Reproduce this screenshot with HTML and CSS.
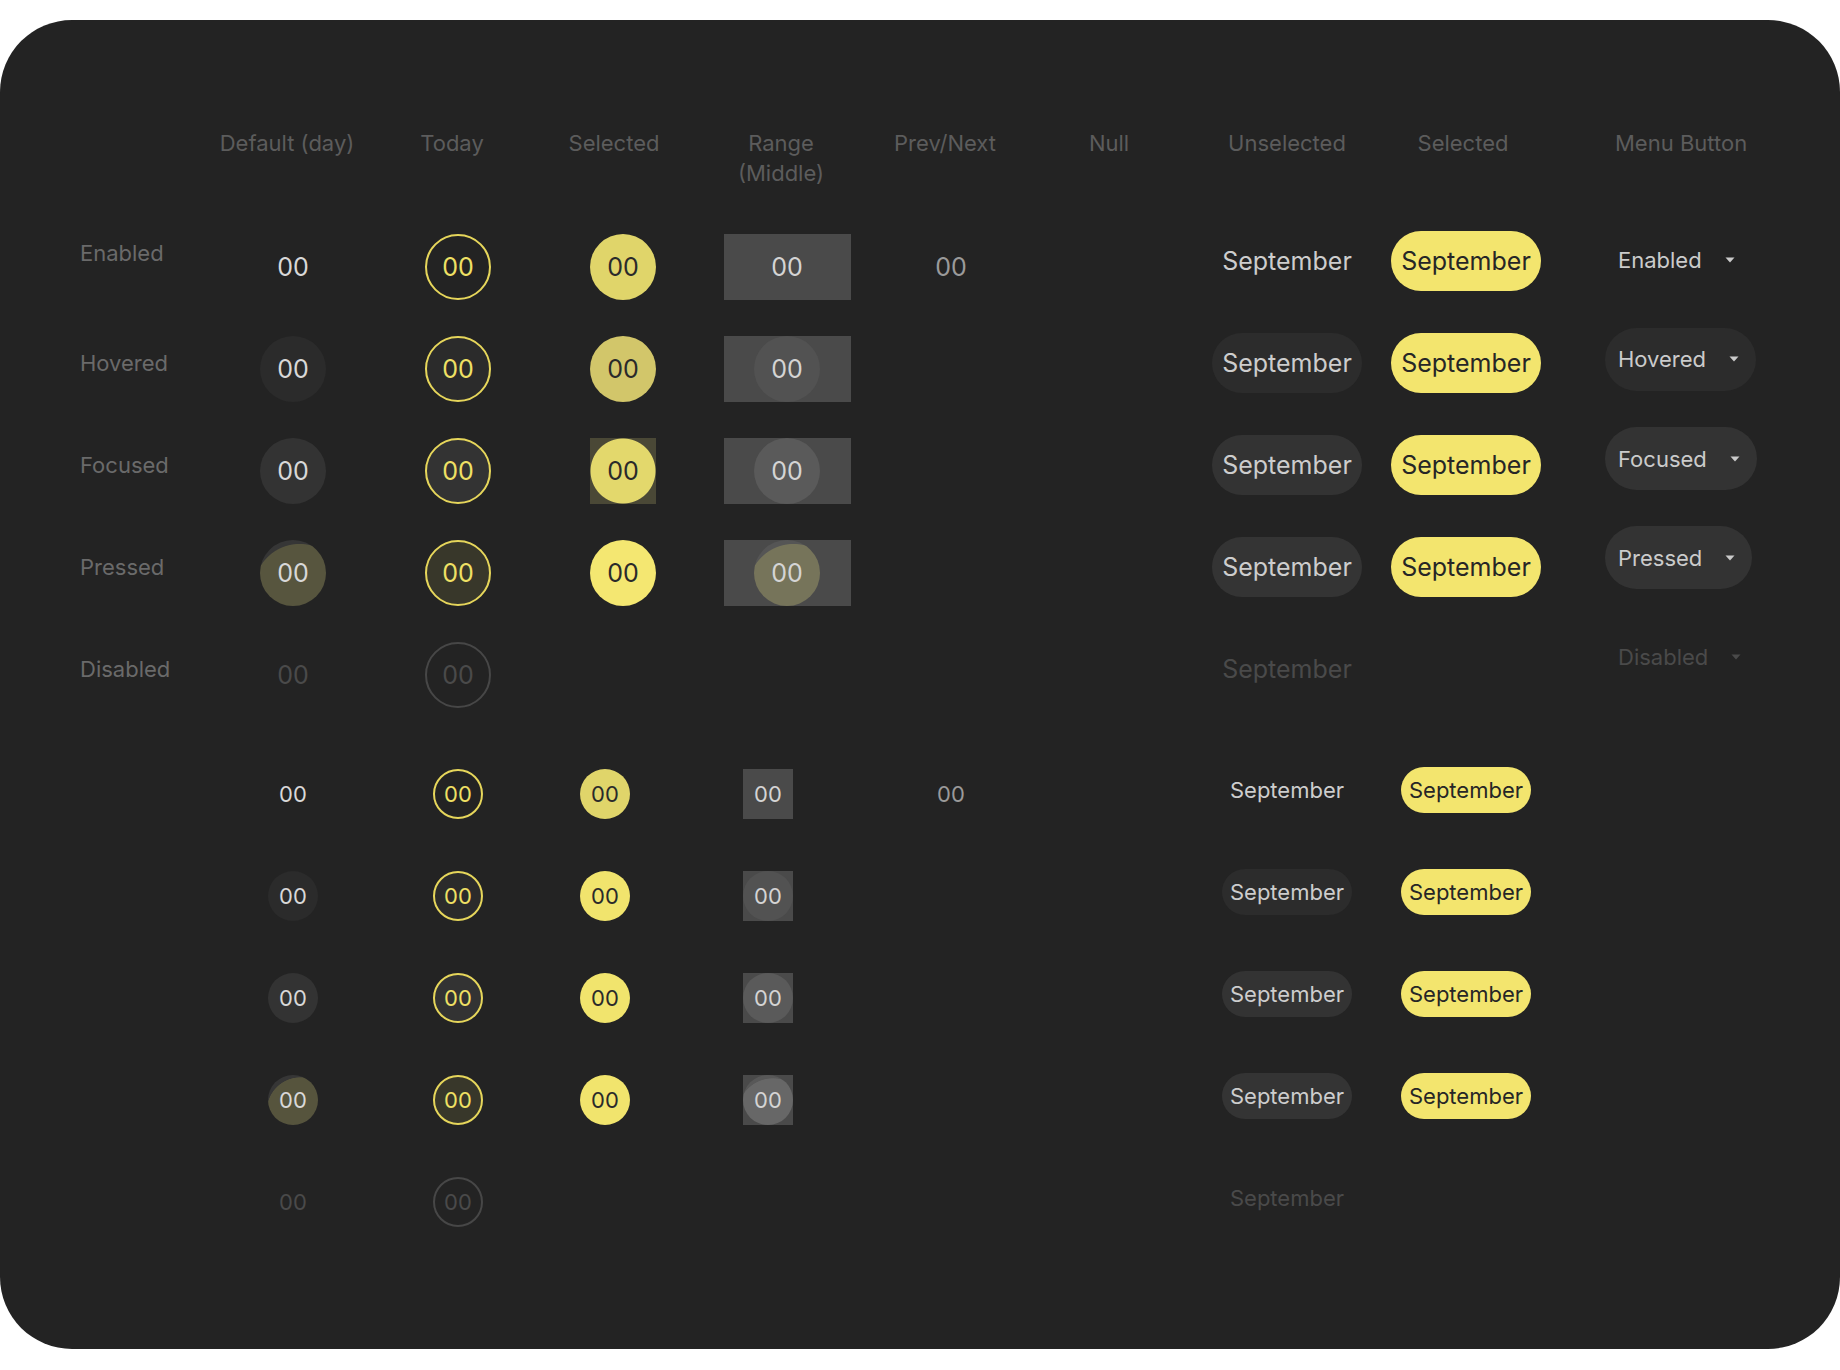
FILE: index.html
```html
<!DOCTYPE html>
<html lang="en">
<head>
<meta charset="utf-8">
<title>Date picker states</title>
<link rel="stylesheet" href="styles.css">
</head>
<body>
<div class="card">
  <div class="grid top">
    <div></div>
    <div class="hd">Default (day)</div>
    <div class="hd">Today</div>
    <div class="hd hd-s">Selected</div>
    <div class="hd">Range<br>(Middle)</div>
    <div class="hd">Prev/Next</div>
    <div class="hd">Null</div>
    <div class="hd hd-u">Unselected</div>
    <div class="hd hd-y">Selected</div>
    <div class="hd hd-m">Menu Button</div>

    <div class="menu-col">
      <div class="mb">Enabled<svg class="caret" width="10" height="6" viewBox="0 0 10 6"><path d="M0.5 0.5h9L5 5.5z"/></svg></div>
      <div class="mb hov">Hovered<svg class="caret" width="10" height="6" viewBox="0 0 10 6"><path d="M0.5 0.5h9L5 5.5z"/></svg></div>
      <div class="mb foc">Focused<svg class="caret" width="10" height="6" viewBox="0 0 10 6"><path d="M0.5 0.5h9L5 5.5z"/></svg></div>
      <div class="mb prs">Pressed<svg class="caret" width="10" height="6" viewBox="0 0 10 6"><path d="M0.5 0.5h9L5 5.5z"/></svg></div>
      <div class="mb dis">Disabled<svg class="caret" width="10" height="6" viewBox="0 0 10 6"><path d="M0.5 0.5h9L5 5.5z"/></svg></div>
    </div>

    <!-- Enabled -->
    <div class="lbl lbl-first">Enabled</div>
    <div class="cell"><span class="day">00</span></div>
    <div class="cell"><span class="day today">00</span></div>
    <div class="cell"><span class="day sel">00</span></div>
    <div class="cell"><span class="rng"><span class="day">00</span></span></div>
    <div class="cell"><span class="day pn">00</span></div>
    <div class="cell"></div>
    <div class="pcell"><span class="pill">September</span></div>
    <div class="pcell"><span class="pill ysel">September</span></div>

    <!-- Hovered -->
    <div class="lbl">Hovered</div>
    <div class="cell"><span class="day hov">00</span></div>
    <div class="cell"><span class="day today hov">00</span></div>
    <div class="cell"><span class="day sel hov">00</span></div>
    <div class="cell"><span class="rng"><span class="day hov">00</span></span></div>
    <div class="cell"></div>
    <div class="cell"></div>
    <div class="pcell"><span class="pill hov">September</span></div>
    <div class="pcell"><span class="pill ysel">September</span></div>

    <!-- Focused -->
    <div class="lbl">Focused</div>
    <div class="cell"><span class="day foc">00</span></div>
    <div class="cell"><span class="day today foc">00</span></div>
    <div class="cell"><span class="day sel foc">00</span></div>
    <div class="cell"><span class="rng"><span class="day foc">00</span></span></div>
    <div class="cell"></div>
    <div class="cell"></div>
    <div class="pcell"><span class="pill foc">September</span></div>
    <div class="pcell"><span class="pill ysel">September</span></div>

    <!-- Pressed -->
    <div class="lbl">Pressed</div>
    <div class="cell"><span class="day prs">00</span></div>
    <div class="cell"><span class="day today prs">00</span></div>
    <div class="cell"><span class="day sel prs">00</span></div>
    <div class="cell"><span class="rng"><span class="day prs">00</span></span></div>
    <div class="cell"></div>
    <div class="cell"></div>
    <div class="pcell"><span class="pill prs">September</span></div>
    <div class="pcell"><span class="pill ysel">September</span></div>

    <!-- Disabled -->
    <div class="lbl">Disabled</div>
    <div class="cell"><span class="day dis">00</span></div>
    <div class="cell"><span class="day today dis">00</span></div>
    <div class="cell"></div>
    <div class="cell"></div>
    <div class="cell"></div>
    <div class="cell"></div>
    <div class="pcell"><span class="pill dis">September</span></div>
    <div class="pcell"></div>
  </div>

  <div class="grid bottom sm">
    <!-- Enabled -->
    <div></div>
    <div class="cell"><span class="day">00</span></div>
    <div class="cell"><span class="day today">00</span></div>
    <div class="cell cell-s"><span class="day sel">00</span></div>
    <div class="cell cell-r"><span class="rng"><span class="day">00</span></span></div>
    <div class="cell"><span class="day pn">00</span></div>
    <div class="cell"></div>
    <div class="pcell"><span class="pill">September</span></div>
    <div class="pcell"><span class="pill ysel">September</span></div>

    <!-- Hovered -->
    <div></div>
    <div class="cell"><span class="day hov">00</span></div>
    <div class="cell"><span class="day today hov">00</span></div>
    <div class="cell cell-s"><span class="day sel hov">00</span></div>
    <div class="cell cell-r"><span class="rng"><span class="day hov">00</span></span></div>
    <div class="cell"></div>
    <div class="cell"></div>
    <div class="pcell"><span class="pill hov">September</span></div>
    <div class="pcell"><span class="pill ysel">September</span></div>

    <!-- Focused -->
    <div></div>
    <div class="cell"><span class="day foc">00</span></div>
    <div class="cell"><span class="day today foc">00</span></div>
    <div class="cell cell-s"><span class="day sel foc">00</span></div>
    <div class="cell cell-r"><span class="rng"><span class="day foc">00</span></span></div>
    <div class="cell"></div>
    <div class="cell"></div>
    <div class="pcell"><span class="pill foc">September</span></div>
    <div class="pcell"><span class="pill ysel">September</span></div>

    <!-- Pressed -->
    <div></div>
    <div class="cell"><span class="day prs">00</span></div>
    <div class="cell"><span class="day today prs">00</span></div>
    <div class="cell cell-s"><span class="day sel prs">00</span></div>
    <div class="cell cell-r"><span class="rng"><span class="day prs">00</span></span></div>
    <div class="cell"></div>
    <div class="cell"></div>
    <div class="pcell"><span class="pill prs">September</span></div>
    <div class="pcell"><span class="pill ysel">September</span></div>

    <!-- Disabled -->
    <div></div>
    <div class="cell"><span class="day dis">00</span></div>
    <div class="cell"><span class="day today dis">00</span></div>
    <div class="cell"></div>
    <div class="cell"></div>
    <div class="cell"></div>
    <div class="cell"></div>
    <div class="pcell"><span class="pill dis">September</span></div>
    <div class="pcell"></div>
  </div>
</div>
</body>
</html>
```

FILE: styles.css
```css
* { box-sizing: border-box; }

html, body {
  margin: 0;
  background: #ffffff;
}

body {
  padding-top: 20px;
  font-family: Inter, "Noto Sans", "Liberation Sans", sans-serif;
}

.card {
  width: 1840px;
  height: 1329px;
  background: #232323;
  border-radius: 72px;
  padding: 108px 0 0 80px;
}

.grid {
  display: grid;
}

.top {
  grid-template-columns: 131px 164px 166px 164px 164px 164px 164px 180px 178px 250px;
  grid-template-rows: 88px repeat(5, 102px);
}

.bottom {
  grid-template-columns: 131px 164px 166px 164px 164px 164px 164px 180px 178px;
  grid-template-rows: repeat(5, 102px);
  margin-top: 17px;
}

/* headers */
.hd {
  font-size: 22px;
  line-height: 30px;
  color: #5c5c5c;
  text-align: center;
  padding-right: 12px;
}
.hd-s { padding-right: 18px; }
.hd-u { padding-right: 0; }
.hd-y { padding-right: 6px; }
.hd-m { text-align: left; padding: 0 0 0 60px; }

/* row labels */
.lbl {
  font-size: 22px;
  line-height: 30px;
  color: #6a6a6a;
  margin-top: 30px;
}
.lbl-first { margin-top: 22px; }

/* cells */
.cell {
  display: flex;
  align-items: center;
  justify-content: center;
}
.sm .cell-s { justify-content: flex-start; padding-left: 39px; }
.sm .cell-r { justify-content: flex-start; padding-left: 38px; }

.pcell {
  display: flex;
  align-items: flex-start;
  justify-content: center;
}

/* day circle */
.day {
  width: 66px;
  height: 66px;
  border-radius: 50%;
  display: flex;
  align-items: center;
  justify-content: center;
  font-size: 25px;
  color: #d8d8d8;
}
.sm .day {
  width: 50px;
  height: 50px;
  font-size: 22px;
}

.day.hov { background: #2b2b2b; }
.day.foc { background: #333333; }
.day.prs { background: radial-gradient(circle 46px at 60% 75%, #57553e 98%, #363636 100%); }
.sm .day.prs { background: radial-gradient(circle 34px at 65% 72%, #56543d 98%, #363636 100%); }
.day.dis { color: #4a4a4a; }
.day.pn { color: #9a9a9a; }

/* today */
.day.today {
  border: 2px solid #e6d65b;
  color: #efe064;
}
.day.today.prs { background: #38372a; }
.day.today.dis { border-color: #474747; color: #4a4a4a; }

/* selected */
.day.sel { background: #e0d56a; color: #2a2a2a; }
.day.sel.hov { background: #d2c66a; }
.day.sel.foc {
  border-radius: 0;
  background: radial-gradient(circle closest-side, #e3d86c calc(100% - 1px), #4a4836 100%);
}
.day.sel.prs { background: #f4e771; }
.sm .day.sel.hov,
.sm .day.sel.foc,
.sm .day.sel.prs {
  border-radius: 50%;
  background: #f1e46d;
}

/* range */
.rng {
  width: 127px;
  height: 66px;
  background: #4a4a4a;
  display: flex;
  align-items: center;
  justify-content: center;
}
.sm .rng {
  width: 50px;
  height: 50px;
}
.rng .day { color: #d4d4d4; }
.rng .day.hov { background: #525252; }
.rng .day.foc { background: #5a5a5a; }
.rng .day.prs { background: radial-gradient(circle 46px at 60% 75%, #76745a 98%, #555555 100%); }
.sm .rng .day.prs { background: radial-gradient(circle 36px at 60% 78%, #676767 98%, #585858 100%); }

/* year pills */
.pill {
  height: 60px;
  line-height: 60px;
  border-radius: 30px;
  padding: 0 10px;
  margin-top: 15px;
  font-size: 25px;
  color: #cdcdcd;
  white-space: nowrap;
}
.sm .pill {
  height: 46px;
  line-height: 46px;
  border-radius: 23px;
  padding: 0 8px;
  margin-top: 24px;
  font-size: 22px;
}
.pill.hov { background: #2c2c2c; }
.pill.foc { background: #333333; }
.pill.prs { background: #343434; }
.pill.dis { color: #4a4a4a; }
.pill.ysel { background: #f3e56e; color: #262626; }

/* menu buttons */
.menu-col {
  grid-column: 10;
  grid-row: 2 / span 5;
  display: flex;
  flex-direction: column;
  align-items: flex-start;
  gap: 36.25px;
  padding: 12.5px 0 0 50px;
}

.mb {
  height: 63px;
  border-radius: 32px;
  padding: 0 17px 0 13px;
  display: flex;
  align-items: center;
  gap: 23px;
  font-size: 22px;
  color: #cbcbcb;
}
.mb.hov { background: #2c2c2c; }
.mb.foc { background: #333333; }
.mb.prs { background: #333333; }
.mb.dis { color: #4a4a4a; }

.caret { fill: currentColor; display: block; }
```
